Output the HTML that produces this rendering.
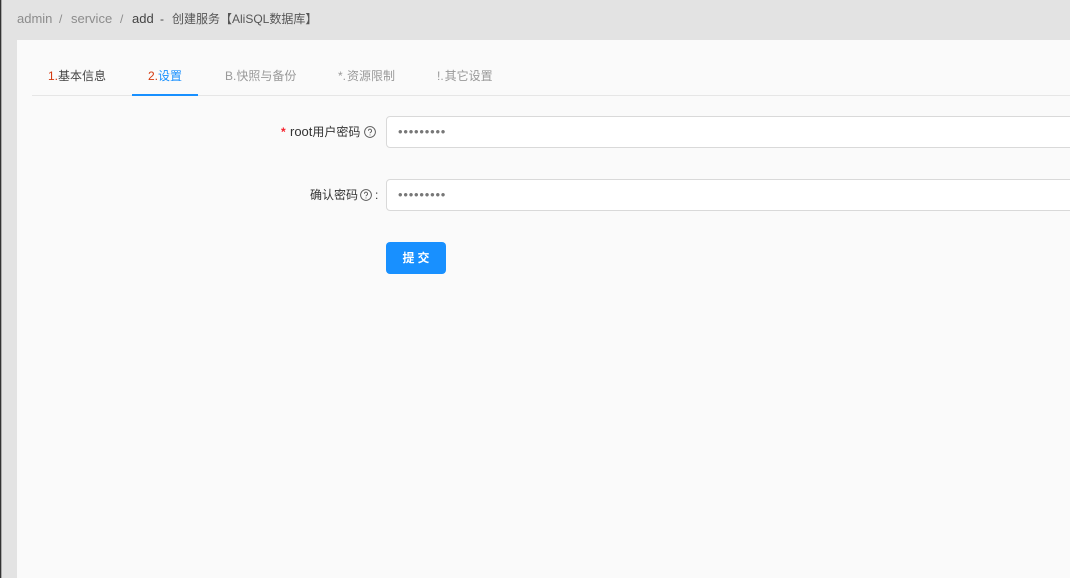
<!DOCTYPE html>
<html lang="zh">
<head>
<meta charset="utf-8">
<title>add</title>
<style>
html,body{margin:0;padding:0;width:1070px;height:578px;overflow:hidden;background:#e3e3e3;}
body{position:relative;font-family:"Liberation Sans","Noto Sans CJK SC",sans-serif;font-size:12px;color:#333;}
.t{position:absolute;white-space:nowrap;line-height:16px;}
.l{font-size:13px;}
#strip{position:absolute;left:0;top:0;width:1px;height:578px;background:#333;border-right:1px solid #aaa;}
#card{position:absolute;left:17px;top:40px;width:1053px;height:538px;background:#fafafa;}
#divider{position:absolute;left:32px;top:95px;width:1038px;height:1px;background:#e6e6e6;}
#ink{position:absolute;left:132px;top:94px;width:66px;height:2px;background:#1890ff;}
.tab{top:68px;color:#999;}
.r{color:#d4380d;}
.input{position:absolute;left:386px;width:700px;height:30px;border:1px solid #d9d9d9;border-radius:4px;background:#fff;}
.dots{position:absolute;left:398px;white-space:nowrap;font-size:13px;line-height:16px;color:#777;letter-spacing:.8px;}
#btn{position:absolute;left:386px;top:242px;width:60px;height:32px;border-radius:4px;background:#1890ff;color:#fff;text-align:center;line-height:32px;font-size:12px;font-weight:bold;letter-spacing:3px;text-indent:3px;}
svg{position:absolute;}
</style>
</head>
<body>
<div id="strip"></div>
<div class="t l" style="left:17px;top:11px;color:#8c8c8c;">admin</div>
<div class="t" style="left:59px;top:11px;color:#8c8c8c;">/</div>
<div class="t l" style="left:71px;top:11px;color:#8c8c8c;">service</div>
<div class="t" style="left:120px;top:11px;color:#8c8c8c;">/</div>
<div class="t l" style="left:132px;top:11px;color:#444;">add</div>
<div class="t" style="left:160px;top:11px;color:#444;">-</div>
<div class="t" style="left:172px;top:11px;color:#555;">创建服务【AliSQL数据库】</div>
<div id="card"></div>
<div id="divider"></div>
<div id="ink"></div>
<div class="t tab" style="left:48px;color:#444;"><span class="r">1.</span>基本信息</div>
<div class="t tab" style="left:148px;color:#1890ff;"><span class="r">2.</span>设置</div>
<div class="t tab" style="left:225px;">B.快照与备份</div>
<div class="t tab" style="left:338px;">*.&#8202;资源限制</div>
<div class="t tab" style="left:437px;">!.&#8202;其它设置</div>
<div class="t" style="left:281px;top:124px;color:#f5222d;font-weight:bold;">*</div>
<div class="t" style="left:290px;top:124px;color:#333;"><span class="l">root</span>用户密码</div>
<svg style="left:364px;top:126px;" width="12" height="12" viewBox="0 0 12 12" fill="none" stroke="#555" stroke-width="0.9"><circle cx="6" cy="6" r="5.4"/><path d="M4.4 4.7a1.6 1.6 0 1 1 2.4 1.4c-.5.3-.8.6-.8 1.2"/><path d="M6 8.5v.9"/></svg>
<div class="input" style="top:116px;"></div>
<div class="dots" style="top:124px;">•••••••••</div>
<div class="t" style="left:310px;top:187px;color:#333;">确认密码</div>
<svg style="left:360px;top:189px;" width="12" height="12" viewBox="0 0 12 12" fill="none" stroke="#555" stroke-width="0.9"><circle cx="6" cy="6" r="5.4"/><path d="M4.4 4.7a1.6 1.6 0 1 1 2.4 1.4c-.5.3-.8.6-.8 1.2"/><path d="M6 8.5v.9"/></svg>
<div class="t" style="left:375px;top:187px;color:#333;">:</div>
<div class="input" style="top:179px;"></div>
<div class="dots" style="top:187px;">•••••••••</div>
<div id="btn">提交</div>
</body>
</html>
